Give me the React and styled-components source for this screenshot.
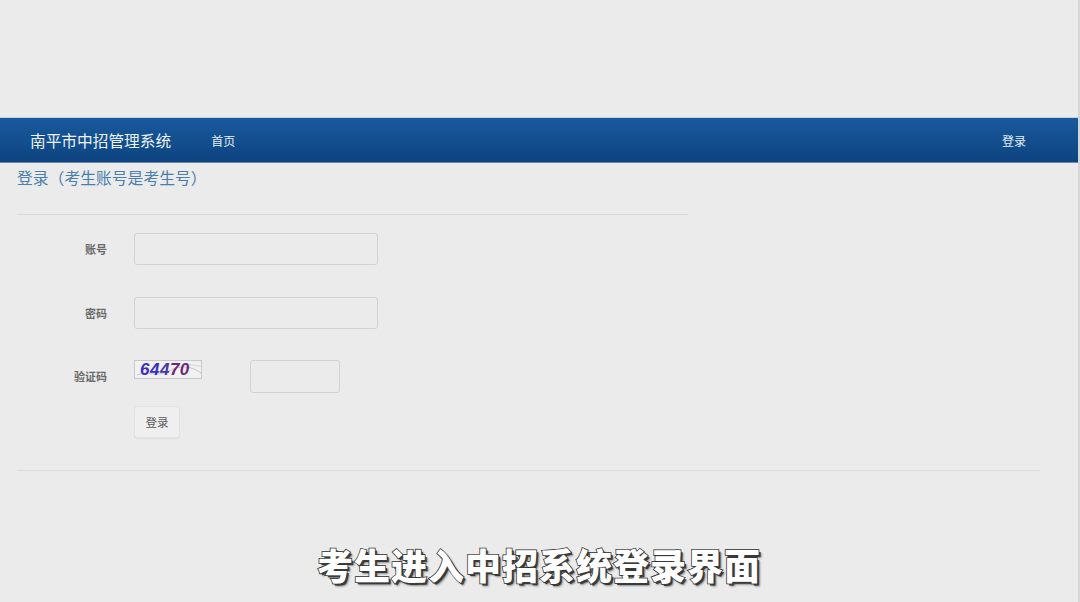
import styled, { createGlobalStyle } from "styled-components";

const GlobalStyle = createGlobalStyle`
    html, body {
        margin: 0;
        padding: 0;
        background: #ebebeb;
        font-family: "Noto Sans CJK SC", "Liberation Sans", sans-serif;
    }
`;

export default function App() {
    return (
        <>
            <GlobalStyle />
            <Screen>
                <TopGap />
                <NavBar>
                    <Brand>南平市中招管理系统</Brand>
                    <NavLink>首页</NavLink>
                    <NavRight>登录</NavRight>
                </NavBar>
                <Content>
                    <Title>登录（考生账号是考生号）</Title>
                    <ShortRule />
                    <FormRow gap={32}>
                        <Label>账号</Label>
                        <Input />
                    </FormRow>
                    <FormRow gap={31}>
                        <Label>密码</Label>
                        <Input />
                    </FormRow>
                    <FormRow captcha gap={13}>
                        <Label>验证码</Label>
                        <Captcha>
                            <svg width="68" height="19" viewBox="0 0 68 19">
                                <path d="M2 14 C 12 9, 22 17, 34 10 S 58 6, 66 12" stroke="#aaa" strokeWidth="0.6" fill="none" />
                                <path d="M48 3 L 66 5" stroke="#bbb" strokeWidth="0.5" fill="none" />
                            </svg>
                            <CaptchaText>
                                <span style={{ color: "#3a2fbf" }}>64</span>
                                <span style={{ color: "#4a3aa8" }}>4</span>
                                <span style={{ color: "#6b2a78" }}>70</span>
                            </CaptchaText>
                        </Captcha>
                        <SmallInput />
                    </FormRow>
                    <ButtonRow>
                        <Button>登录</Button>
                    </ButtonRow>
                    <LongRule />
                </Content>
                <Subtitle>考生进入中招系统登录界面</Subtitle>
            </Screen>
        </>
    );
}

const Screen = styled.div`
    position: relative;
    width: 1080px;
    height: 602px;
    overflow: hidden;
    background: #ebebeb;
    border-right: 2px solid #d6d6d6;
    box-sizing: border-box;
`;

const TopGap = styled.div`
    height: 117px;
`;

const NavBar = styled.div`
    display: flex;
    align-items: center;
    height: 46px;
    padding: 0 0 0 30px;
    background: linear-gradient(#195a9e, #0d437f);
    border-top: 1px solid #c9d3de;
    border-bottom: 1px solid #6b87a8;
    box-sizing: border-box;
`;

const Brand = styled.div`
    font-size: 15.7px;
    color: #eef3f9;
    margin-right: 40px;
`;

const NavLink = styled.div`
    font-size: 12px;
    color: #e6edf5;
`;

const NavRight = styled.div`
    margin-left: auto;
    margin-right: 52px;
    font-size: 12px;
    color: #e6edf5;
`;

const Content = styled.div`
    padding: 3px 38px 0 17px;
`;

const Title = styled.div`
    font-size: 15.8px;
    color: #4a7fae;
    line-height: 24px;
`;

const ShortRule = styled.div`
    width: 671px;
    height: 1px;
    background: #d9d9d9;
    margin: 24px 0 18px;
`;

const FormRow = styled.div`
    display: flex;
    align-items: ${p => (p.captcha ? "flex-start" : "center")};
    margin-bottom: ${p => p.gap}px;
`;

const Label = styled.div`
    width: 90px;
    text-align: right;
    font-size: 11px;
    font-weight: bold;
    color: #6a6a6a;
    margin-right: 27px;
    line-height: 32px;
`;

const Input = styled.div`
    width: 244px;
    height: 32px;
    box-sizing: border-box;
    border: 1px solid #d2d2d2;
    border-radius: 3px;
    background: #ebebeb;
`;

const Captcha = styled.div`
    position: relative;
    width: 68px;
    height: 19px;
    border: 1px solid #c8c8c8;
    box-sizing: border-box;
    background: #f1f1f1;
    svg {
        position: absolute;
        left: 0;
        top: 0;
    }
`;

const CaptchaText = styled.div`
    position: absolute;
    left: 5px;
    top: -1px;
    font-family: "Liberation Sans", sans-serif;
    font-style: italic;
    font-weight: bold;
    font-size: 17px;
    letter-spacing: 0.5px;
`;

const SmallInput = styled.div`
    width: 90px;
    height: 33px;
    margin-left: 48px;
    box-sizing: border-box;
    border: 1px solid #d2d2d2;
    border-radius: 3px;
    background: #ebebeb;
`;

const ButtonRow = styled.div`
    padding-left: 117px;
`;

const Button = styled.div`
    width: 46px;
    height: 32px;
    box-sizing: border-box;
    display: flex;
    align-items: center;
    justify-content: center;
    font-size: 11.5px;
    color: #5a5a5a;
    background: #efefef;
    border: 1px solid #e2e2e2;
    border-radius: 3px;
    box-shadow: 0 1px 1px rgba(0, 0, 0, 0.05);
`;

const LongRule = styled.div`
    height: 1px;
    background: #dadada;
    margin-top: 32px;
    width: 1023px;
`;

const Subtitle = styled.div`
    position: absolute;
    left: 0;
    right: 0;
    top: 538px;
    text-align: center;
    font-size: 36px;
    font-weight: 900;
    color: #ffffff;
    letter-spacing: 1px;
    -webkit-text-stroke: 1.5px #2a2a2a;
    paint-order: stroke fill;
    text-shadow: 2px 2px 0 #3a3a3a, 3px 3px 2px rgba(0, 0, 0, 0.4);
`;
